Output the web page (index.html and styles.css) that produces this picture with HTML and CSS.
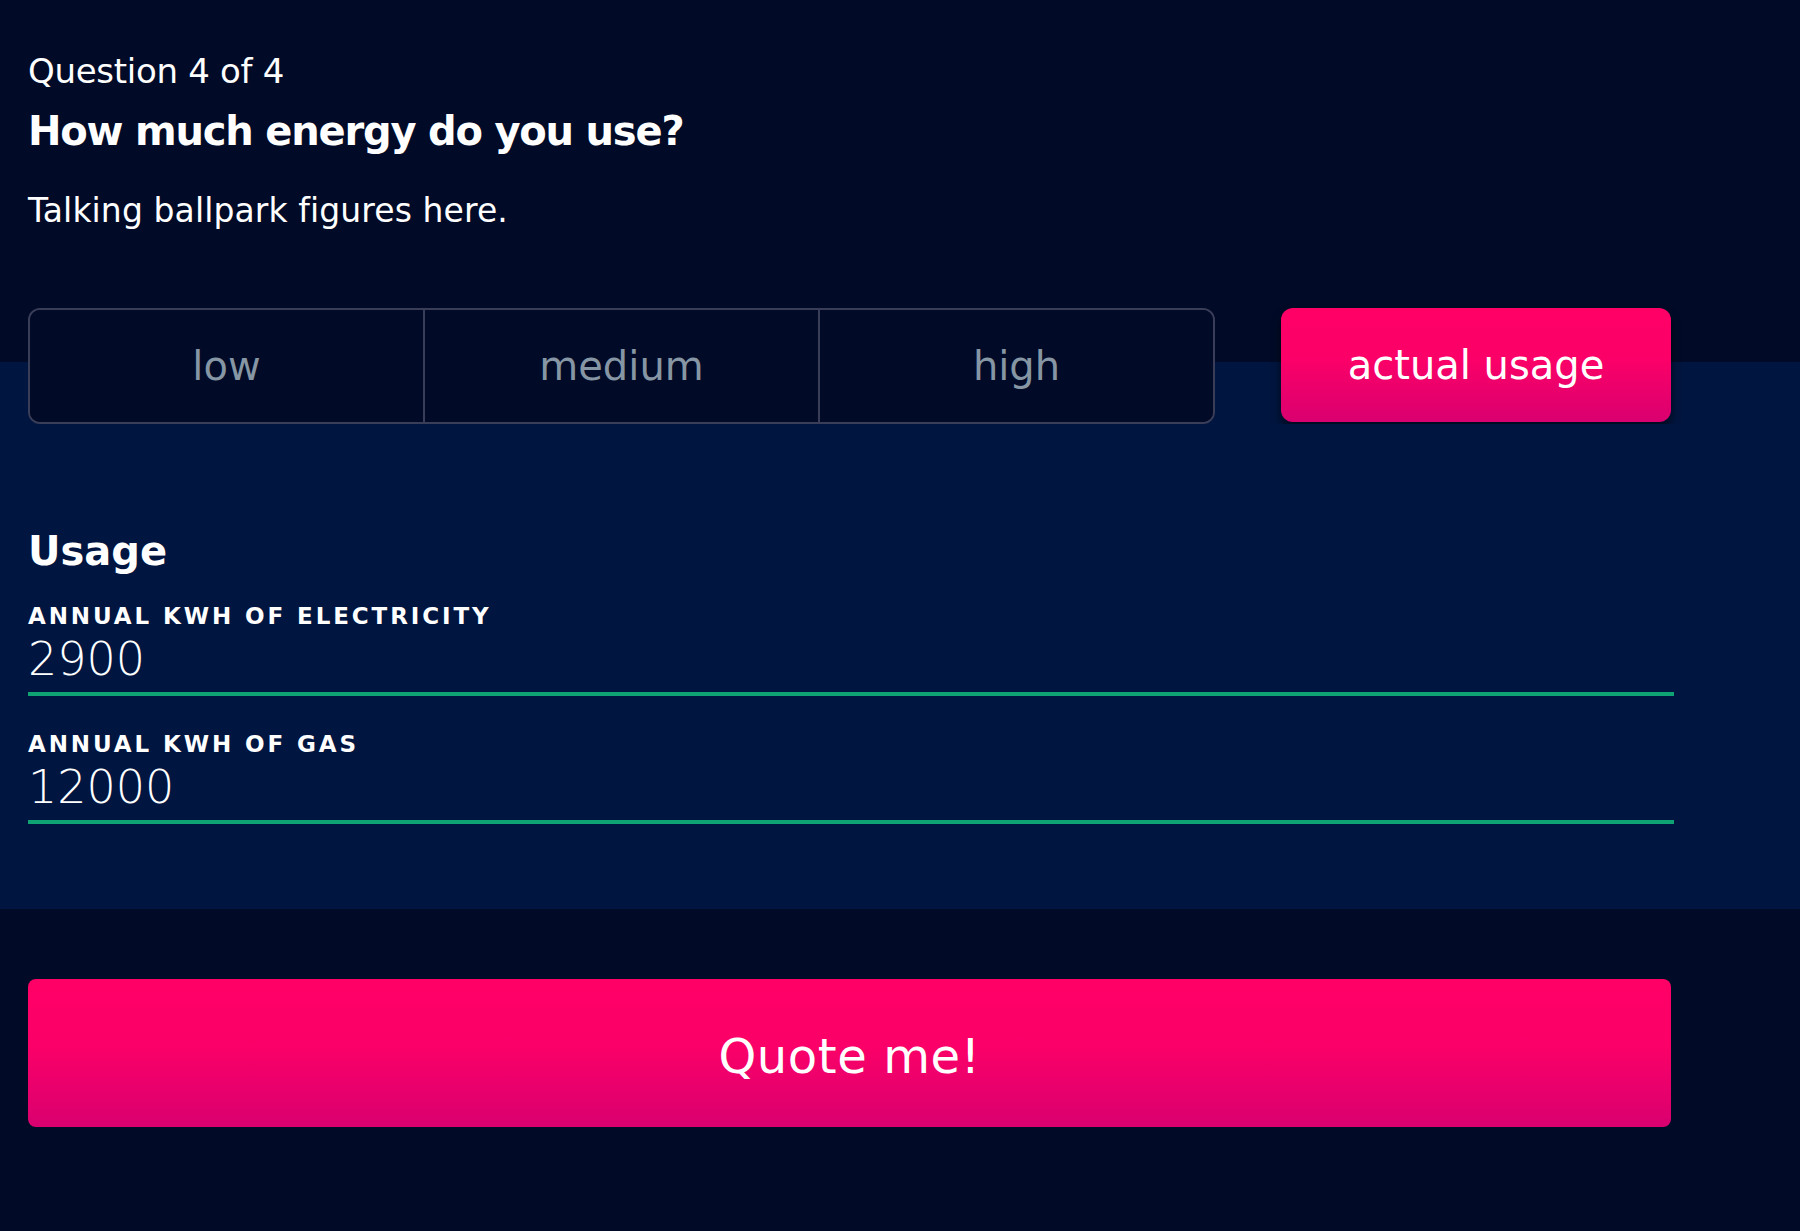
FILE: index.html
```html
<!DOCTYPE html>
<html lang="en">
<head>
<meta charset="utf-8">
<title>Quote</title>
<link rel="stylesheet" href="styles.css">
</head>
<body>
<main class="page">
  <header class="intro">
    <p class="step">Question 4 of 4</p>
    <h1 class="title">How much energy do you use?</h1>
    <p class="subtitle">Talking ballpark figures here.</p>
  </header>

  <div class="choices">
    <div class="segments">
      <button class="seg">low</button>
      <button class="seg">medium</button>
      <button class="seg">high</button>
    </div>
    <button class="actual">actual usage</button>
  </div>

  <section class="usage">
    <h2 class="usage-title">Usage</h2>
    <label class="field">
      <span class="field-label">Annual kWh of electricity</span>
      <span class="field-value">2900</span>
    </label>
    <label class="field">
      <span class="field-label">Annual kWh of gas</span>
      <span class="field-value">12000</span>
    </label>
  </section>

  <div class="submit-row">
    <button class="quote">Quote me!</button>
  </div>
</main>
</body>
</html>
```

FILE: styles.css
```css
html, body {
  margin: 0;
  padding: 0;
}
body {
  background: #010b27;
  color: #ffffff;
  font-family: "DejaVu Sans", "Noto Sans", sans-serif;
  height: 1231px;
  overflow: hidden;
}
.page {
  display: flex;
  flex-direction: column;
}
.intro {
  padding: 51px 28px 0;
}
.step {
  margin: 0;
  font-size: 34px;
  line-height: 40px;
  font-weight: 400;
  letter-spacing: -0.3px;
}
.title {
  margin: 17px 0 0;
  font-size: 40px;
  line-height: 46px;
  font-weight: 700;
  letter-spacing: -1.2px;
}
.subtitle {
  margin: 37px 0 0;
  font-size: 33px;
  line-height: 40px;
  font-weight: 400;
  letter-spacing: 0.1px;
}
.choices {
  margin-top: 77px;
  padding: 0 129px 0 28px;
  display: flex;
  gap: 66px;
  background: linear-gradient(to bottom, #010b27 0, #010b27 54px, #00153f 54px, #00153f 100%);
}
.segments {
  flex: 1;
  display: flex;
  height: 116px;
  box-sizing: border-box;
  border: 2px solid #3a3d58;
  border-radius: 12px;
  background: #010b27;
  overflow: hidden;
}
.seg {
  flex: 1;
  border: 0;
  border-left: 2px solid #3a3d58;
  background: #010b27;
  color: #8696a4;
  font-family: inherit;
  font-size: 40px;
  font-weight: 400;
  padding: 0;
}
.seg:first-child {
  border-left: 0;
}
.actual {
  width: 390px;
  height: 114px;
  border: 0;
  border-radius: 12px;
  background: linear-gradient(to bottom, #ff0066 0%, #fb0068 45%, #d9006f 100%);
  color: #ffffff;
  font-family: inherit;
  font-size: 40px;
  padding: 0;
  box-shadow: 0 6px 10px rgba(0, 0, 0, 0.55);
}
.usage {
  background: #00153f;
  padding: 103px 126px 85px 28px;
}
.usage-title {
  margin: 0;
  font-size: 40px;
  line-height: 48px;
  font-weight: 700;
}
.field {
  display: flex;
  flex-direction: column;
  border-bottom: 4px solid #0fa374;
}
.usage-title + .field {
  margin-top: 29px;
}
.field + .field {
  margin-top: 36px;
}
.field-label {
  font-size: 23px;
  line-height: 24px;
  font-weight: 700;
  letter-spacing: 2.9px;
  text-transform: uppercase;
}
.field-value {
  padding-bottom: 2px;
  font-size: 46px;
  line-height: 62px;
  font-weight: 200;
}
.submit-row {
  padding: 70px 129px 0 28px;
}
.quote {
  width: 100%;
  height: 148px;
  border: 0;
  border-radius: 8px;
  background: linear-gradient(to bottom, #ff0066 0%, #fb0068 45%, #d9006f 100%);
  color: #ffffff;
  font-family: inherit;
  font-size: 48px;
  letter-spacing: 0.6px;
  padding: 6px 0 0;
}
```
